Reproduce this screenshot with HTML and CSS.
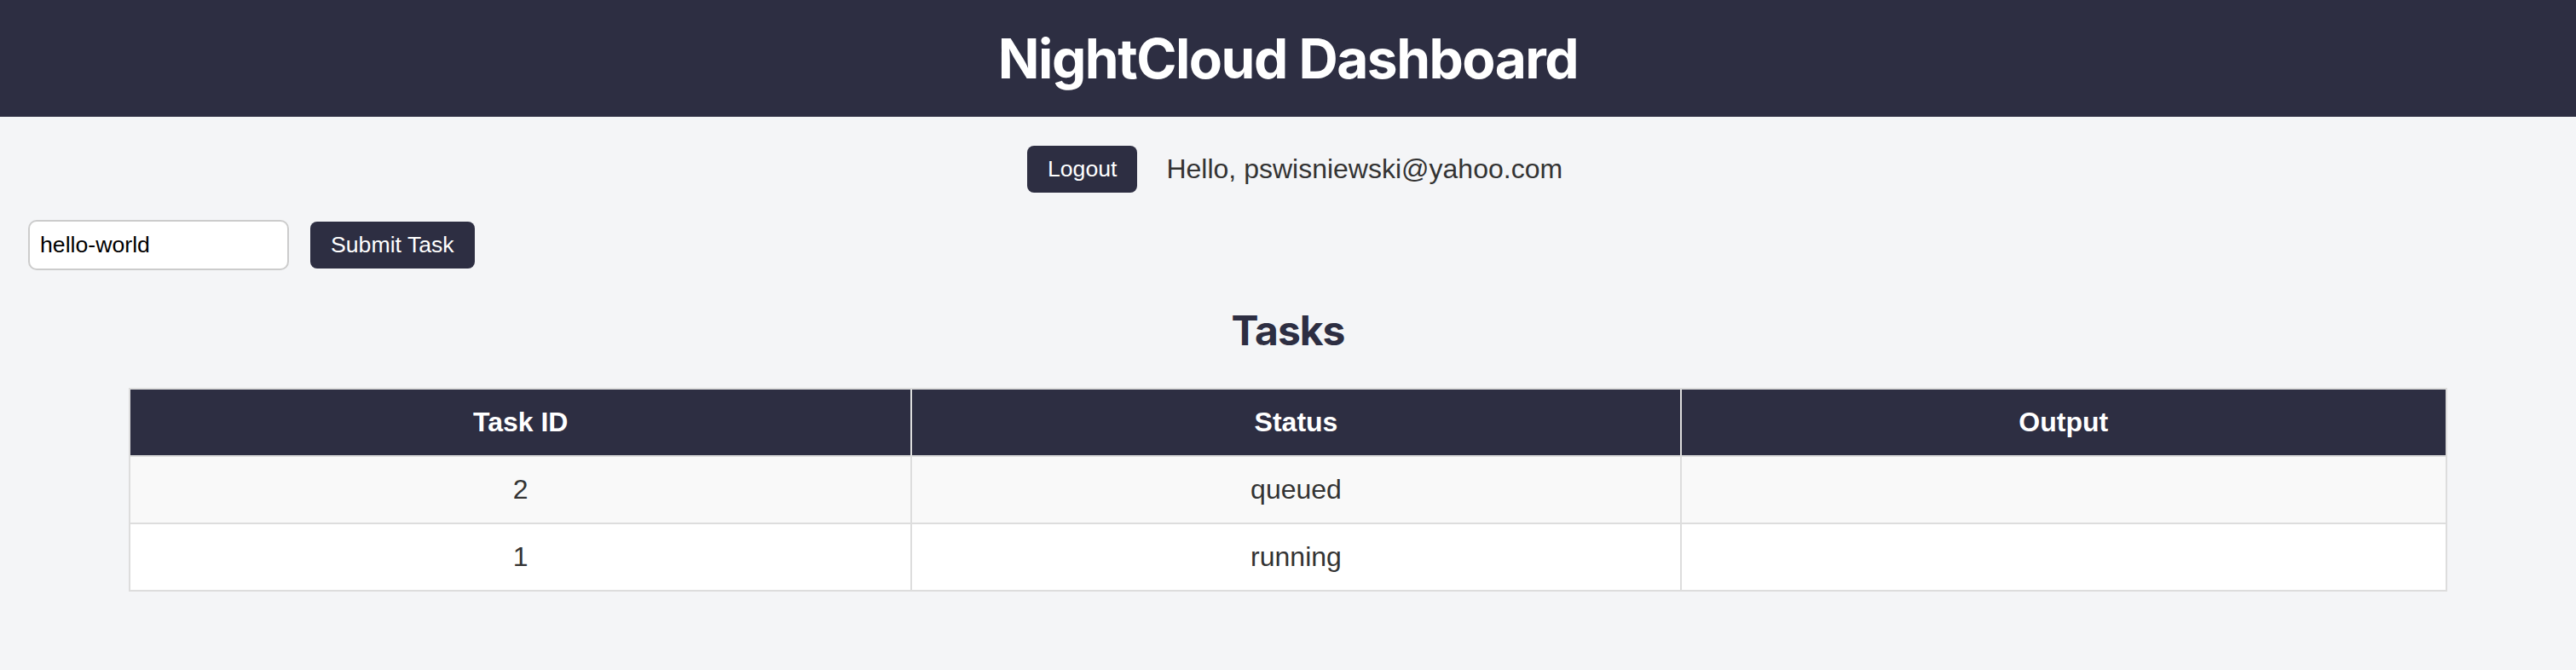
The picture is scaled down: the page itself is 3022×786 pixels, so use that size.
FILE: index.html
```html
<!DOCTYPE html>
<html>
<head>
    <title>NightCloud Dashboard</title>
    <link rel="stylesheet" href="styles.css">
</head>
<body>
    <header>
        <h1>NightCloud Dashboard</h1>
    </header>
    <div class="user-bar">
        <button class="btn" id="logout">Logout</button>
        <span class="greeting">Hello, pswisniewski@yahoo.com</span>
    </div>
    <form id="task-form" class="task-form">
        <input type="text" id="task-name" name="task" value="hello-world">
        <button type="submit" class="btn">Submit Task</button>
    </form>
    <h2>Tasks</h2>
    <table class="tasks">
        <colgroup>
            <col class="col-id">
            <col class="col-status">
            <col>
        </colgroup>
        <thead>
            <tr>
                <th>Task ID</th>
                <th>Status</th>
                <th>Output</th>
            </tr>
        </thead>
        <tbody>
            <tr>
                <td>2</td>
                <td>queued</td>
                <td></td>
            </tr>
            <tr>
                <td>1</td>
                <td>running</td>
                <td></td>
            </tr>
        </tbody>
    </table>
</body>
</html>
```

FILE: styles.css
```css
body {
    font-family: "Liberation Sans", Arial, sans-serif;
    font-size: 32px;
    background-color: #f4f5f7;
    color: #333;
    margin: 0;
}
header {
    background-color: #2d2e42;
    padding: 30px 0;
    text-align: center;
}
header h1 {
    margin: 0;
    font-family: Inter, "Liberation Sans", sans-serif;
    font-weight: 700;
    font-size: 64px;
    letter-spacing: -1.5px;
    color: #ffffff;
}
.btn {
    background-color: #2d2e42;
    color: #ffffff;
    font-family: "Liberation Sans", Arial, sans-serif;
    font-size: 26.67px;
    padding: 12px 24px;
    border: none;
    border-radius: 8px;
    cursor: pointer;
}
.user-bar {
    display: flex;
    justify-content: center;
    align-items: center;
    gap: 34px;
    padding: 34px 0 0 16px;
}
.greeting {
    color: #333;
}
.task-form {
    display: flex;
    align-items: center;
    gap: 25px;
    margin: 32px 0 0;
    padding-left: 33px;
}
.task-form input[type="text"] {
    width: 306px;
    box-sizing: border-box;
    padding: 12px;
    font-family: "Liberation Sans", Arial, sans-serif;
    font-size: 26.67px;
    color: #000;
    background-color: #fff;
    border: 2px solid #cccccc;
    border-radius: 10px;
}
h2 {
    font-family: Inter, "Liberation Sans", sans-serif;
    font-size: 48px;
    font-weight: 700;
    letter-spacing: -1px;
    color: #2d2e42;
    text-align: center;
    margin: 41px 0 38px;
}
.tasks {
    width: 90%;
    margin: 0 auto;
    border-collapse: collapse;
    background-color: #fff;
}
.col-id {
    width: 33.75%;
}
.col-status {
    width: 33.2%;
}
.tasks th,
.tasks td {
    border: 2px solid #dddddd;
    text-align: center;
    padding: 20px;
    line-height: 37px;
}
.tasks th {
    background-color: #2d2e42;
    color: #fff;
    font-weight: 700;
}
.tasks tbody tr:nth-child(odd) {
    background-color: #f9f9f9;
}
```
